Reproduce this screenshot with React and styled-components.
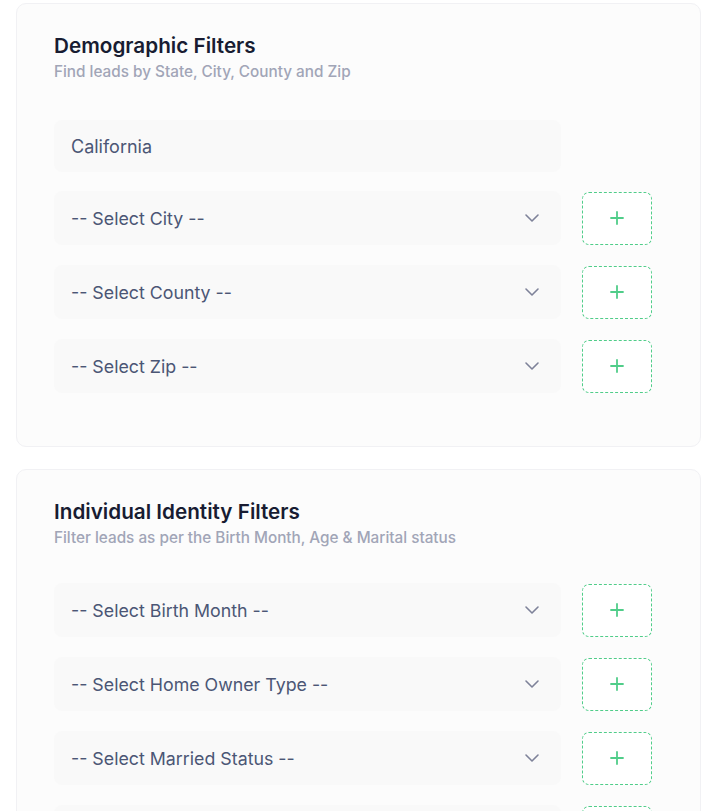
import React from 'react';
import styled, { createGlobalStyle } from 'styled-components';

const GlobalStyle = createGlobalStyle`
  body {
    margin: 0;
    background: #ffffff;
    font-family: Inter, "Noto Sans", sans-serif;
  }
`;

const sections = [
  {
    title: 'Demographic Filters',
    subtitle: 'Find leads by State, City, County and Zip',
    state: 'California',
    selects: ['-- Select City --', '-- Select County --', '-- Select Zip --'],
  },
  {
    title: 'Individual Identity Filters',
    subtitle: 'Filter leads as per the Birth Month, Age & Marital status',
    selects: [
      '-- Select Birth Month --',
      '-- Select Home Owner Type --',
      '-- Select Married Status --',
      '-- Select Age Range --',
    ],
  },
];

function Chevron() {
  return (
    <svg width="16" height="16" viewBox="0 0 16 16" fill="none">
      <polyline points="2,5 8,11 14,5" stroke="#7e8299" strokeWidth="1.6" strokeLinecap="round" strokeLinejoin="round" />
    </svg>
  );
}

function Plus() {
  return (
    <svg width="14" height="14" viewBox="0 0 14 14" fill="none">
      <path d="M7 1v12M1 7h12" stroke="#50cd89" strokeWidth="1.8" strokeLinecap="round" />
    </svg>
  );
}

const App = () => (
  <Page>
    <GlobalStyle />
    {sections.map((s) => (
      <Card key={s.title}>
        <Title>{s.title}</Title>
        <Subtitle>{s.subtitle}</Subtitle>
        <Fields $hasState={!!s.state}>
          {s.state && (
            <Row>
              <StateBox>{s.state}</StateBox>
            </Row>
          )}
          {s.selects.map((label) => (
            <Row key={label}>
              <SelectBox>
                <span>{label}</span>
                <Chevron />
              </SelectBox>
              <AddButton>
                <Plus />
              </AddButton>
            </Row>
          ))}
        </Fields>
      </Card>
    ))}
  </Page>
);

const Page = styled.div`
  padding: 3px 19px 0 16px;
  display: flex;
  flex-direction: column;
  gap: 22px;
`;

const Card = styled.div`
  background: #fcfcfc;
  border: 1px solid #f1f1f4;
  border-radius: 10px;
  padding: 29px 48px 53px 37px;
`;

const Title = styled.div`
  font-size: 20.7px;
  line-height: 26px;
  font-weight: 600;
  color: #181c32;
`;

const Subtitle = styled.div`
  margin-top: 3px;
  font-size: 15.3px;
  line-height: 20px;
  font-weight: 500;
  color: #a1a5b7;
`;

const Fields = styled.div`
  margin-top: ${(p) => (p.$hasState ? '38px' : '35px')};
  display: flex;
  flex-direction: column;
  gap: 20px;
`;

const Row = styled.div`
  display: grid;
  grid-template-columns: 1fr 70px;
  gap: 21px;
  align-items: center;
`;

const StateBox = styled.div`
  height: 52px;
  margin-bottom: -1px;
  background: #f9f9f9;
  border-radius: 8px;
  display: flex;
  align-items: center;
  padding: 0 17px;
  font-size: 18px;
  color: #4b5675;
`;

const SelectBox = styled.div`
  height: 54px;
  background: #f9f9f9;
  border-radius: 8px;
  display: flex;
  align-items: center;
  justify-content: space-between;
  padding: 0 21px 0 17px;
  font-size: 17.8px;
  color: #4b5675;
`;

const AddButton = styled.div`
  height: 53px;
  border: 1px dashed #50cd89;
  border-radius: 7px;
  box-sizing: border-box;
  display: flex;
  align-items: center;
  justify-content: center;
  background: #ffffff;
`;

export default App;
